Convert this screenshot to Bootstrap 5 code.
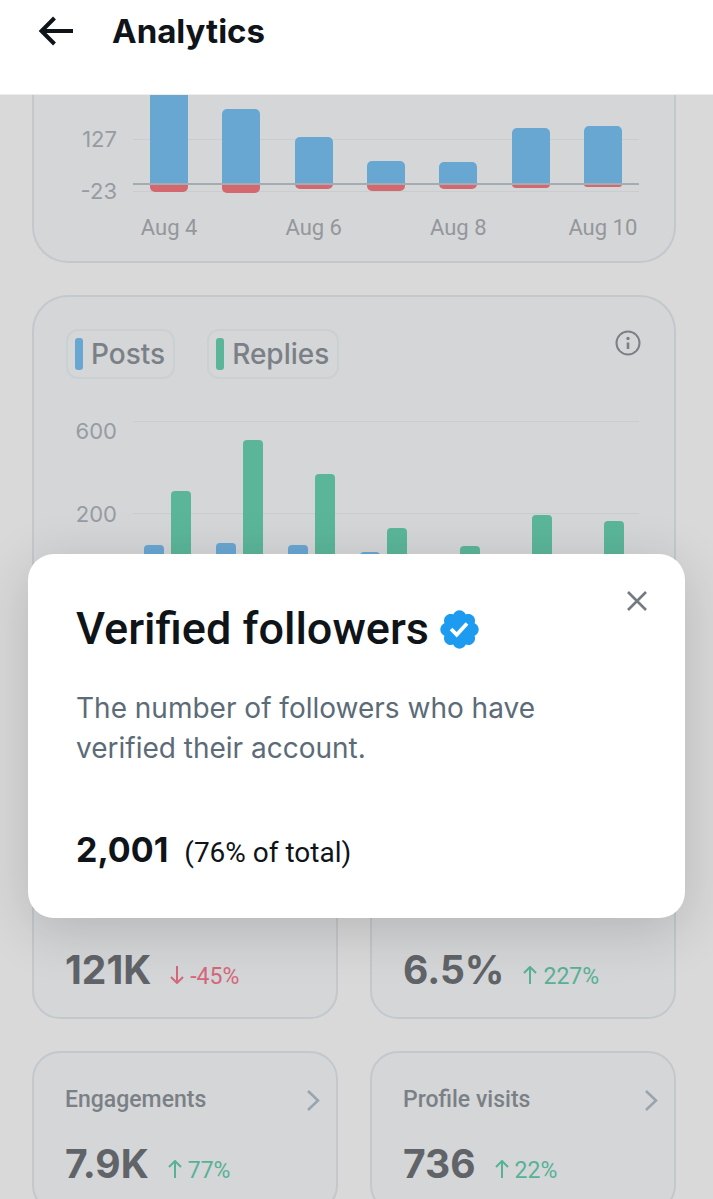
<!DOCTYPE html>
<html lang="en">
<head>
<meta charset="utf-8">
<meta name="viewport" content="width=device-width, initial-scale=1">
<title>Analytics</title>
<link rel="stylesheet" href="https://cdn.jsdelivr.net/npm/bootstrap@5.3.0/dist/css/bootstrap.min.css">
<style>
  body { background: #d9d9d9; font-family: Inter, "Liberation Sans", sans-serif; color: #0f1419; }
  .alt-face { font-family: Roboto, "Liberation Sans", sans-serif; }
  .top-bar { height: 95px; padding: 0 38px 32px; border-bottom: 1px solid #eceeee; gap: 36px; }
  .top-bar h1 { font-size: 33px; line-height: 40px; font-weight: 700; }
  .icon-btn { border: 0; background: none; padding: 0; line-height: 0; color: inherit; }
  .page-main { padding: 0 37px 32px 32px; gap: 32px; }

  .panel { background: #d4d6d8; border: 2px solid #c2c8cc; border-radius: 36px; }
  .panel-cut { border-top: 0; border-top-left-radius: 0; border-top-right-radius: 0; padding-bottom: 19px; }
  .panel-posts { padding-top: 32px; min-height: 530px; }
  .panel-tools { padding: 0 32px; color: #7b8086; }

  .chart { padding: 0 35px 0 0; gap: 16px; }
  .axis-y { width: 83px; font-size: 22px; color: #969ca2; text-align: right; }
  .plot-net .axis-y { padding-top: 32px; line-height: 24px; gap: 28px; }
  .plot-posts { margin-top: 42px; }
  .plot-posts .axis-y { line-height: 20px; gap: 63px; }
  .axis-x { font-size: 22px; line-height: 28px; color: #94979b; margin-top: 22px; }
  .plot { position: relative; }
  .plot-net .plot { height: 97px; }
  .plot-posts .plot { height: 139px; }
  .rule { position: absolute; left: 0; right: 0; height: 1px; background: #c9cdd0; }
  .zero { height: 2px; background: #a3abb3; }
  .day { position: relative; }
  .bar-up, .bar-down { width: 38px; }
  .bar-up { background: #69a7d3; border-radius: 5px 5px 0 0; }
  .bar-down { background: #d4686f; border-radius: 0 0 5px 5px; }
  .net-up { height: 89px; }
  .plot-posts .day { gap: 7px; padding-right: 4px; }
  .bar-pair { width: 20px; border-radius: 4px 4px 0 0; }
  .tone-post { background: #69a7d3; }
  .tone-reply { background: #5bb699; }

  .legend { border: 2px solid #cbd0d3; border-radius: 12px; height: 50px; padding: 0 8px 0 7px; gap: 8px; font-size: 28px; font-weight: 500; color: #7b8086; }
  .swatch { width: 8px; height: 32px; border-radius: 3px; }

  .stats { --bs-gutter-x: 32px; --bs-gutter-y: 32px; }
  .stat { height: 162px; border-radius: 28px; padding: 31px 14px 0 31px; }
  .stat-name { font-size: 23px; line-height: 32px; font-weight: 500; color: #7b8086; text-decoration: none; }
  .stat-value { font-size: 39px; line-height: 48px; font-weight: 700; color: #606367; }
  .stat-row { gap: 18px; margin-top: 24px; }
  .delta { font-size: 23px; line-height: 28px; gap: 5px; }
  .delta-up { color: #58b196; }
  .delta-down { color: #d4687a; }

  .sheet-wrap { position: absolute; top: 554px; left: 28px; right: 28px; }
  .sheet { background: #fff; border-radius: 26px; padding: 48px 48px 43px; box-shadow: 0 12px 56px rgba(0,0,0,.16); }
  .sheet h2 { font-size: 45px; line-height: 54px; font-weight: 500; }
  .sheet-text { font-size: 28px; line-height: 40px; color: #5b6b78; margin: 32px 0 60px; max-width: 500px; }
  .sheet-total { font-size: 34px; line-height: 44px; font-weight: 700; }
  .sheet-share { font-size: 28px; }
  .sheet-close { position: absolute; top: 29px; right: 30px; color: #727a82; }
</style>
</head>
<body>
<div class="vh-100 overflow-hidden position-relative d-flex flex-column">
  <header class="top-bar bg-white d-flex align-items-center flex-shrink-0">
    <button type="button" class="icon-btn" aria-label="Back">
      <svg width="38" height="32" viewBox="0 0 38 32" fill="none" stroke="currentColor" stroke-width="4"><path d="M35 16H4M16.500 3 3.500 16l13 13"/></svg>
    </button>
    <h1 class="mb-0">Analytics</h1>
  </header>

  <main class="page-main d-flex flex-column">
    <section class="panel panel-cut flex-shrink-0" aria-label="Follows per day">
      <div class="chart plot-net d-flex">
        <div class="axis-y d-flex flex-column"><span>127</span><span>-23</span></div>
        <div class="flex-grow-1">
          <div class="plot d-flex" id="netPlot">
            <span class="rule" style="top:44px"></span><span class="rule" style="top:96px"></span>
          </div>
          <div class="axis-x alt-face d-flex text-center text-nowrap">
            <span class="col">Aug 4</span><span class="col"></span><span class="col">Aug 6</span><span class="col"></span><span class="col">Aug 8</span><span class="col"></span><span class="col">Aug 10</span>
          </div>
        </div>
      </div>
    </section>

    <section class="panel panel-posts flex-shrink-0" aria-label="Posts and replies per day">
      <div class="panel-tools d-flex align-items-start">
        <div class="d-flex flex-grow-1 gap-4">
          <div class="legend d-flex align-items-center me-2"><span class="swatch tone-post"></span>Posts</div>
          <div class="legend d-flex align-items-center"><span class="swatch tone-reply"></span>Replies</div>
        </div>
        <button type="button" class="icon-btn" aria-label="About this chart">
          <svg width="28" height="28" viewBox="0 0 28 28" fill="none" stroke="currentColor" stroke-width="2"><circle cx="14" cy="14" r="11.500"/><path d="M14 13.500v6.500" stroke-width="2.600"/><circle cx="14" cy="9.500" r="1.700" fill="currentColor" stroke="none"/></svg>
        </button>
      </div>
      <div class="chart plot-posts d-flex">
        <div class="axis-y d-flex flex-column"><span>600</span><span>200</span></div>
        <div class="plot flex-grow-1 d-flex" id="postPlot">
          <span class="rule" style="top:0"></span><span class="rule" style="top:92px"></span>
        </div>
      </div>
    </section>

    <div class="row stats">
      <div class="col-6"><div class="panel stat">
        <a href="#" class="stat-name alt-face d-block">&nbsp;</a>
        <div class="stat-row d-flex align-items-baseline"><span class="stat-value">121K</span>
          <span class="delta delta-down alt-face d-flex align-items-baseline"><svg width="16" height="18" viewBox="0 0 16 18" fill="none" stroke="currentColor" stroke-width="2"><path d="M8 0v17M2 11l6 6 6-6"/></svg>-45%</span></div>
      </div></div>
      <div class="col-6"><div class="panel stat">
        <a href="#" class="stat-name alt-face d-block">&nbsp;</a>
        <div class="stat-row d-flex align-items-baseline"><span class="stat-value">6.5%</span>
          <span class="delta delta-up alt-face d-flex align-items-baseline"><svg width="16" height="18" viewBox="0 0 16 18" fill="none" stroke="currentColor" stroke-width="2"><path d="M8 18V1M2 7l6-6 6 6"/></svg>227%</span></div>
      </div></div>
      <div class="col-6"><div class="panel stat">
        <a href="#" class="stat-name alt-face d-flex justify-content-between align-items-center">Engagements<svg width="16" height="24" viewBox="0 0 16 24" fill="none" stroke="#98a4ae" stroke-width="2.500"><path d="m2 3 10 9.500L2 22"/></svg></a>
        <div class="stat-row d-flex align-items-baseline"><span class="stat-value">7.9K</span>
          <span class="delta delta-up alt-face d-flex align-items-baseline"><svg width="16" height="18" viewBox="0 0 16 18" fill="none" stroke="currentColor" stroke-width="2"><path d="M8 18V1M2 7l6-6 6 6"/></svg>77%</span></div>
      </div></div>
      <div class="col-6"><div class="panel stat">
        <a href="#" class="stat-name alt-face d-flex justify-content-between align-items-center">Profile visits<svg width="16" height="24" viewBox="0 0 16 24" fill="none" stroke="#98a4ae" stroke-width="2.500"><path d="m2 3 10 9.500L2 22"/></svg></a>
        <div class="stat-row d-flex align-items-baseline"><span class="stat-value">736</span>
          <span class="delta delta-up alt-face d-flex align-items-baseline"><svg width="16" height="18" viewBox="0 0 16 18" fill="none" stroke="currentColor" stroke-width="2"><path d="M8 18V1M2 7l6-6 6 6"/></svg>22%</span></div>
      </div></div>
    </div>
  </main>

  <div class="sheet-wrap" role="dialog" aria-labelledby="sheetTitle">
    <div class="sheet">
      <button type="button" class="icon-btn sheet-close" aria-label="Close">
        <svg width="36" height="36" viewBox="0 0 36 36" fill="none" stroke="currentColor" stroke-width="2.600"><path d="m9 9 18 18M27 9 9 27"/></svg>
      </button>
      <h2 id="sheetTitle" class="alt-face mb-0 d-flex align-items-center gap-2">Verified followers
        <svg width="45" height="45" viewBox="0 0 22 22" fill="#1d9bf0" role="img" aria-label="Verified"><path d="M20.396 11c-.018-.646-.215-1.275-.57-1.816-.354-.54-.852-.972-1.438-1.246.223-.607.27-1.264.14-1.897-.131-.634-.437-1.218-.882-1.687-.47-.445-1.053-.75-1.687-.882-.633-.13-1.29-.083-1.897.14-.273-.587-.704-1.086-1.245-1.440S11.647 1.620 11 1.604c-.646.017-1.273.213-1.813.568s-.969.854-1.240 1.440c-.608-.223-1.267-.272-1.902-.140-.635.130-1.220.436-1.690.882-.445.470-.749 1.055-.878 1.688-.130.633-.080 1.290.144 1.896-.587.274-1.087.705-1.443 1.245-.356.540-.555 1.170-.574 1.817.020.647.218 1.276.574 1.817.356.540.856.972 1.443 1.245-.224.606-.274 1.263-.144 1.896.130.634.433 1.218.877 1.688.470.443 1.054.747 1.687.878.633.132 1.290.084 1.897-.136.274.586.705 1.084 1.246 1.439.540.354 1.170.551 1.816.569.647-.016 1.276-.213 1.817-.567s.972-.854 1.245-1.440c.604.239 1.266.296 1.903.164.636-.132 1.220-.447 1.680-.907.460-.460.776-1.044.908-1.681s.075-1.299-.165-1.903c.586-.274 1.084-.705 1.439-1.246.354-.540.551-1.170.569-1.816zM9.662 14.850l-3.429-3.428 1.293-1.302 2.072 2.072 4.400-4.794 1.347 1.246z"/></svg>
      </h2>
      <p class="sheet-text">The number of followers who have verified their account.</p>
      <div class="sheet-total d-flex align-items-baseline gap-3">2,001 <span class="sheet-share alt-face fw-normal">(76% of total)</span></div>
    </div>
  </div>
</div>

<script src="https://cdn.jsdelivr.net/npm/bootstrap@5.3.0/dist/js/bootstrap.bundle.min.js"></script>
<script>
  // Bar lengths in pixels above and below the zero line, one pair per day
  const net = [[89, 8], [75, 9], [47, 5], [23, 7], [22, 5], [56, 4], [58, 3]];
  document.getElementById('netPlot').insertAdjacentHTML('beforeend', net.map(([up, down]) =>
    `<div class="day col d-flex flex-column align-items-center"><div class="net-up d-flex align-items-end flex-shrink-0"><div class="bar-up flex-shrink-0${up > 88 ? ' rounded-0' : ''}" style="height:${up}px"></div></div><div class="bar-down flex-shrink-0" style="height:${down}px"></div></div>`
  ).join('') + '<span class="rule zero" style="top:88px"></span>');

  const posts = [[15, 69], [17, 120], [15, 86], [8, 32], [2, 14], [5, 45], [4, 39]];
  document.getElementById('postPlot').insertAdjacentHTML('beforeend', posts.map(([p, r]) =>
    `<div class="day col d-flex align-items-end justify-content-center"><div class="bar-pair tone-post" style="height:${p}px"></div><div class="bar-pair tone-reply" style="height:${r}px"></div></div>`
  ).join(''));
</script>
</body>
</html>
